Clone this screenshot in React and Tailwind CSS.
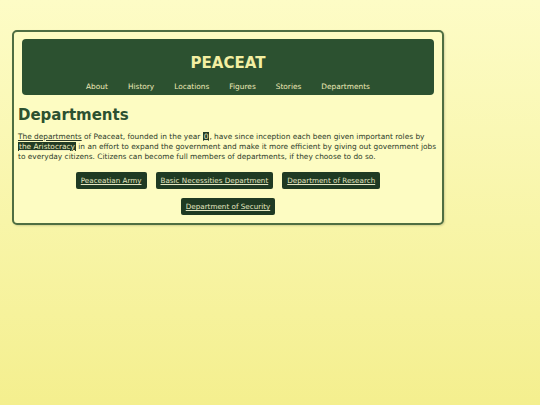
import React from 'react';

const navItems = ['About', 'History', 'Locations', 'Figures', 'Stories', 'Departments'];
const departments = [
    'Peaceatian Army',
    'Basic Necessities Department',
    'Department of Research',
    'Department of Security',
];

export default function App() {
    return (
        <div
            className="min-h-screen w-full bg-gradient-to-b from-[#fdfcc6] to-[#f4ef8e] pt-[30px] pl-[12px]"
            style={{ fontFamily: '"DejaVu Sans", Verdana, sans-serif' }}
        >
            <div className="w-[432px] rounded-[5px] border-2 border-[#4f6e42] bg-[#fdfcc2] px-[4px] pt-[7px] pb-[8px] shadow-[1px_1px_2px_rgba(0,0,0,0.15)]">
                {/* Header */}
                <header className="mx-[4px] rounded-[4px] bg-[#2c5130] pt-[14px] pb-[1px]">
                    <h1 className="text-center text-[15px] font-bold leading-[21px] text-[#f3efa2]">PEACEAT</h1>
                    <nav className="mt-[5px] flex justify-center gap-[20px] text-[7.4px] leading-[15px] text-[#eeeab8]">
                        {navItems.map((item) => (
                            <span key={item}>{item}</span>
                        ))}
                    </nav>
                </header>

                {/* Content */}
                <h2 className="mt-[9px] text-[15px] font-bold leading-[22px] text-[#2c5130]">Departments</h2>
                <p className="mt-[6px] text-[7.4px] leading-[10px] text-[#2b3a28]">
                    <span className="underline">The departments</span> of Peaceat, founded in the year{' '}
                    <span className="inline-block bg-[#223b24] px-[1px] leading-[9px] text-[#f0eec0] underline">0</span>, have since inception each been given important roles by{' '}
                    <span className="inline-block bg-[#223b24] px-[1px] leading-[9px] text-[#f0eec0] underline">the Aristocracy</span> in an effort to expand the government and make it more efficient by giving out government jobs to everyday citizens. Citizens can become full members of departments, if they choose to do so.
                </p>

                <div className="mx-auto mt-[10px] flex w-[360px] flex-wrap justify-center gap-x-[9px] gap-y-[9px]">
                    {departments.map((d) => (
                        <span
                            key={d}
                            className="rounded-[2px] bg-[#1f3a23] px-[5px] text-[7.2px] leading-[17px] text-[#e6e7c2] underline"
                        >
                            {d}
                        </span>
                    ))}
                </div>
            </div>
        </div>
    );
}
